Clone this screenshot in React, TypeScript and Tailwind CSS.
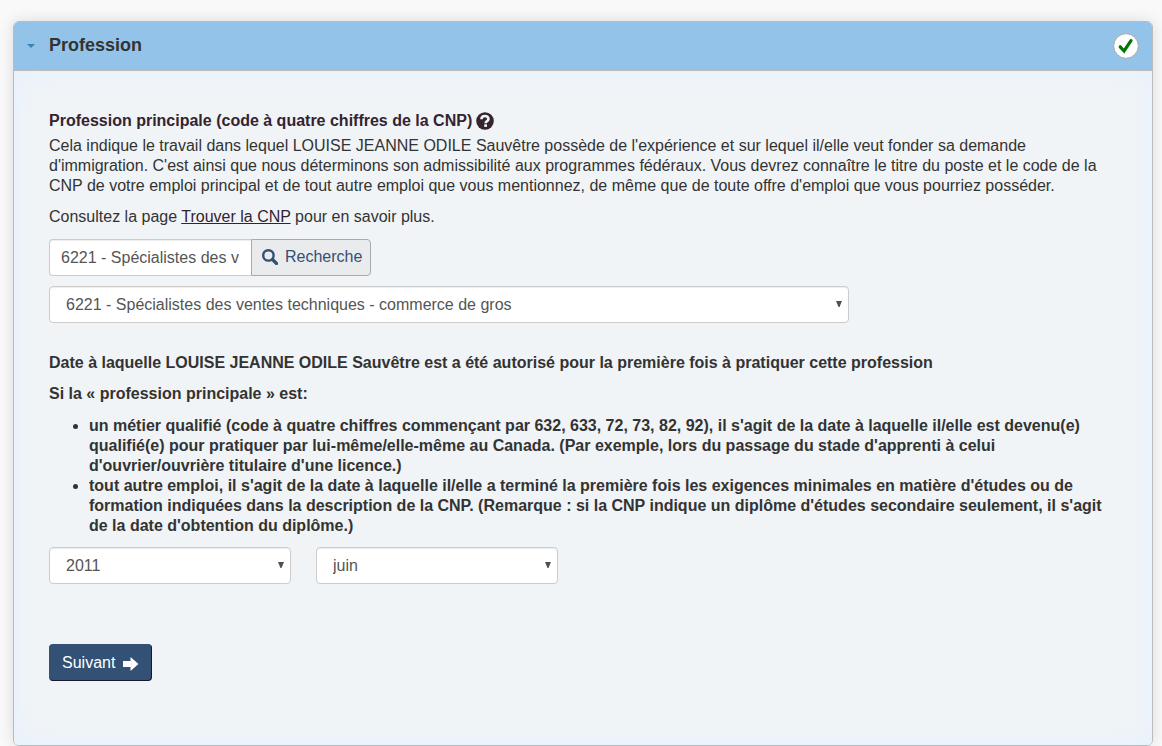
import { FormEvent, ReactNode, useState } from "react";

const OCCUPATION = "6221 - Spécialistes des ventes techniques - commerce de gros";
const YEARS = ["2009", "2010", "2011", "2012", "2013"];
const MONTHS = [
  "janvier",
  "février",
  "mars",
  "avril",
  "mai",
  "juin",
  "juillet",
  "août",
  "septembre",
  "octobre",
  "novembre",
  "décembre",
];

const fieldClass =
  "h-[37px] border border-[#cccccc] bg-white text-[#555555] shadow-[inset_0_1px_1px_rgba(0,0,0,0.075)] focus:outline-none focus:border-[#66afe9]";

function HelpIcon() {
  return (
    <svg className="size-[18px]" viewBox="0 0 18 18" aria-hidden="true">
      <circle cx="9" cy="9" r="8.8" fill="#35232f" />
      <path
        d="M5.4 7.2C5.5 5.2 7 4 9 4s3.5 1.1 3.5 2.9c0 2.2-2.9 2.2-2.9 4.3"
        fill="none"
        stroke="#f0f4f8"
        strokeWidth="2.6"
      />
      <rect x="8.2" y="12.3" width="2.8" height="2.6" fill="#f0f4f8" />
    </svg>
  );
}

function SearchIcon() {
  return (
    <svg className="size-4" viewBox="0 0 16 16" aria-hidden="true">
      <circle cx="6.4" cy="6.4" r="5.2" fill="none" stroke="#335075" strokeWidth="2.4" />
      <path d="M10.5 10.5l4 4" stroke="#335075" strokeWidth="3.2" strokeLinecap="round" />
    </svg>
  );
}

function ArrowIcon() {
  return (
    <svg className="mt-0.5 h-4 w-4" viewBox="0 0 16 16" aria-hidden="true">
      <path d="M0 5h7.5V1l8 7-8 7v-4H0z" fill="#fff" />
    </svg>
  );
}

function CheckBadge() {
  return (
    <svg className="size-[26px]" viewBox="0 0 26 26" role="img" aria-label="Terminé">
      <circle cx="13" cy="13" r="12.3" fill="#fff" stroke="#aaaaaa" />
      <path
        d="M7.2 13.8l3.9 4.2L18 7.6"
        fill="none"
        stroke="#007700"
        strokeWidth="3.2"
        strokeLinecap="round"
      />
    </svg>
  );
}

type SelectProps = {
  id: string;
  label: string;
  value: string;
  onChange: (value: string) => void;
  className: string;
  children: ReactNode;
};

function Select({ id, label, value, onChange, className, children }: SelectProps) {
  return (
    <div className={`relative ${className}`}>
      <select
        id={id}
        aria-label={label}
        value={value}
        onChange={(e) => onChange(e.target.value)}
        className={`${fieldClass} w-full appearance-none rounded pr-6 pl-4`}
      >
        {children}
      </select>
      <svg
        className="pointer-events-none absolute top-[15px] right-[7px] h-[6px] w-[6px]"
        viewBox="0 0 6 6"
        aria-hidden="true"
      >
        <path d="M0 0h6L3.5 6h-1z" fill="#505050" />
      </svg>
    </div>
  );
}

export default function App() {
  const [open, setOpen] = useState(true);
  const [search, setSearch] = useState(OCCUPATION);
  const [occupation, setOccupation] = useState(OCCUPATION);
  const [year, setYear] = useState("2011");
  const [month, setMonth] = useState("juin");

  function handleSubmit(e: FormEvent) {
    e.preventDefault();
  }

  return (
    <div className="min-h-screen bg-[#f9f9f9] pt-[21px] pr-[9px] pl-[13px] font-['Liberation_Sans',Arial,sans-serif] text-base leading-5 text-[#333333]">
      <section className="overflow-hidden rounded-md border border-[#bbbbbb] shadow-[0_0_15px_rgba(0,0,0,0.12)]">
        <h2 className="border-b border-[#bbbbbb]">
          <button
            type="button"
            aria-expanded={open}
            onClick={() => setOpen(!open)}
            className="flex h-12 w-full items-center bg-[#94c3e9] px-[13px] text-left text-lg font-bold"
          >
            <svg className="h-1 w-2" viewBox="0 0 8 4" aria-hidden="true">
              <path d="M0 0h8L4 4z" fill="#3b83b5" />
            </svg>
            <span className="mb-0.5 ml-3.5 flex-1">Profession</span>
            <CheckBadge />
          </button>
        </h2>

        {open && (
          <form
            onSubmit={handleSubmit}
            className="bg-[#f0f4f7] px-[35px] pt-10 pb-16 shadow-[inset_0_0_30px_#e6f1ff]"
          >
            <label htmlFor="search" className="flex items-center gap-1 font-bold text-[#35232f]">
              Profession principale (code à quatre chiffres de la CNP)
              <HelpIcon />
            </label>
            <p className="mt-[5px]">
              Cela indique le travail dans lequel LOUISE JEANNE ODILE Sauvêtre possède de l'expérience
              et sur lequel il/elle veut fonder sa demande d'immigration. C'est ainsi que nous
              déterminons son admissibilité aux programmes fédéraux. Vous devrez connaître le titre du
              poste et le code de la CNP de votre emploi principal et de tout autre emploi que vous
              mentionnez, de même que de toute offre d'emploi que vous pourriez posséder.
            </p>
            <p className="mt-[11px]">
              Consultez la page{" "}
              <a href="#cnp" className="text-[#35232f] underline">
                Trouver la CNP
              </a>{" "}
              pour en savoir plus.
            </p>

            <div className="mt-3 flex">
              <input
                id="search"
                type="text"
                value={search}
                onChange={(e) => setSearch(e.target.value)}
                className={`${fieldClass} w-[202px] rounded-l border-r-0 pr-3 pl-[11px]`}
              />
              <button
                type="button"
                className="flex h-[37px] items-center gap-[7px] rounded-r border border-[#a8abae] bg-[#eaebed] pr-2 pb-0.5 pl-2.5 text-[#335075]"
              >
                <SearchIcon />
                Recherche
              </button>
            </div>

            <Select
              id="occupation"
              label="Profession principale"
              value={occupation}
              onChange={setOccupation}
              className="mt-2.5 max-w-[800px]"
            >
              <option>{OCCUPATION}</option>
            </Select>

            <fieldset className="mt-[30px]">
              <legend className="font-bold">
                Date à laquelle LOUISE JEANNE ODILE Sauvêtre est a été autorisé pour la première fois à
                pratiquer cette profession
              </legend>
              <div className="mt-[11px] font-bold">
                <p>Si la « profession principale » est:</p>
                <ul className="mt-3 list-disc pl-10">
                  <li>
                    un métier qualifié (code à quatre chiffres commençant par 632, 633, 72, 73, 82,
                    92), il s'agit de la date à laquelle il/elle est devenu(e) qualifié(e) pour
                    pratiquer par lui-même/elle-même au Canada. (Par exemple, lors du passage du stade
                    d'apprenti à celui d'ouvrier/ouvrière titulaire d'une licence.)
                  </li>
                  <li>
                    tout autre emploi, il s'agit de la date à laquelle il/elle a terminé la première
                    fois les exigences minimales en matière d'études ou de formation indiquées dans la
                    description de la CNP. (Remarque : si la CNP indique un diplôme d'études
                    secondaire seulement, il s'agit de la date d'obtention du diplôme.)
                  </li>
                </ul>
              </div>
              <div className="mt-[11px] flex gap-[25px]">
                <Select id="year" label="Année" value={year} onChange={setYear} className="w-[242px]">
                  {YEARS.map((y) => (
                    <option key={y}>{y}</option>
                  ))}
                </Select>
                <Select id="month" label="Mois" value={month} onChange={setMonth} className="w-[242px]">
                  {MONTHS.map((m) => (
                    <option key={m}>{m}</option>
                  ))}
                </Select>
              </div>
            </fieldset>

            <button
              type="submit"
              className="mt-[60px] flex h-[37px] items-center gap-2 rounded border border-t-[#335075] border-r-[#141c2b] border-b-[#141c2b] border-l-[#335075] bg-[#335075] px-3 text-white"
            >
              Suivant
              <ArrowIcon />
            </button>
          </form>
        )}
      </section>
    </div>
  );
}
